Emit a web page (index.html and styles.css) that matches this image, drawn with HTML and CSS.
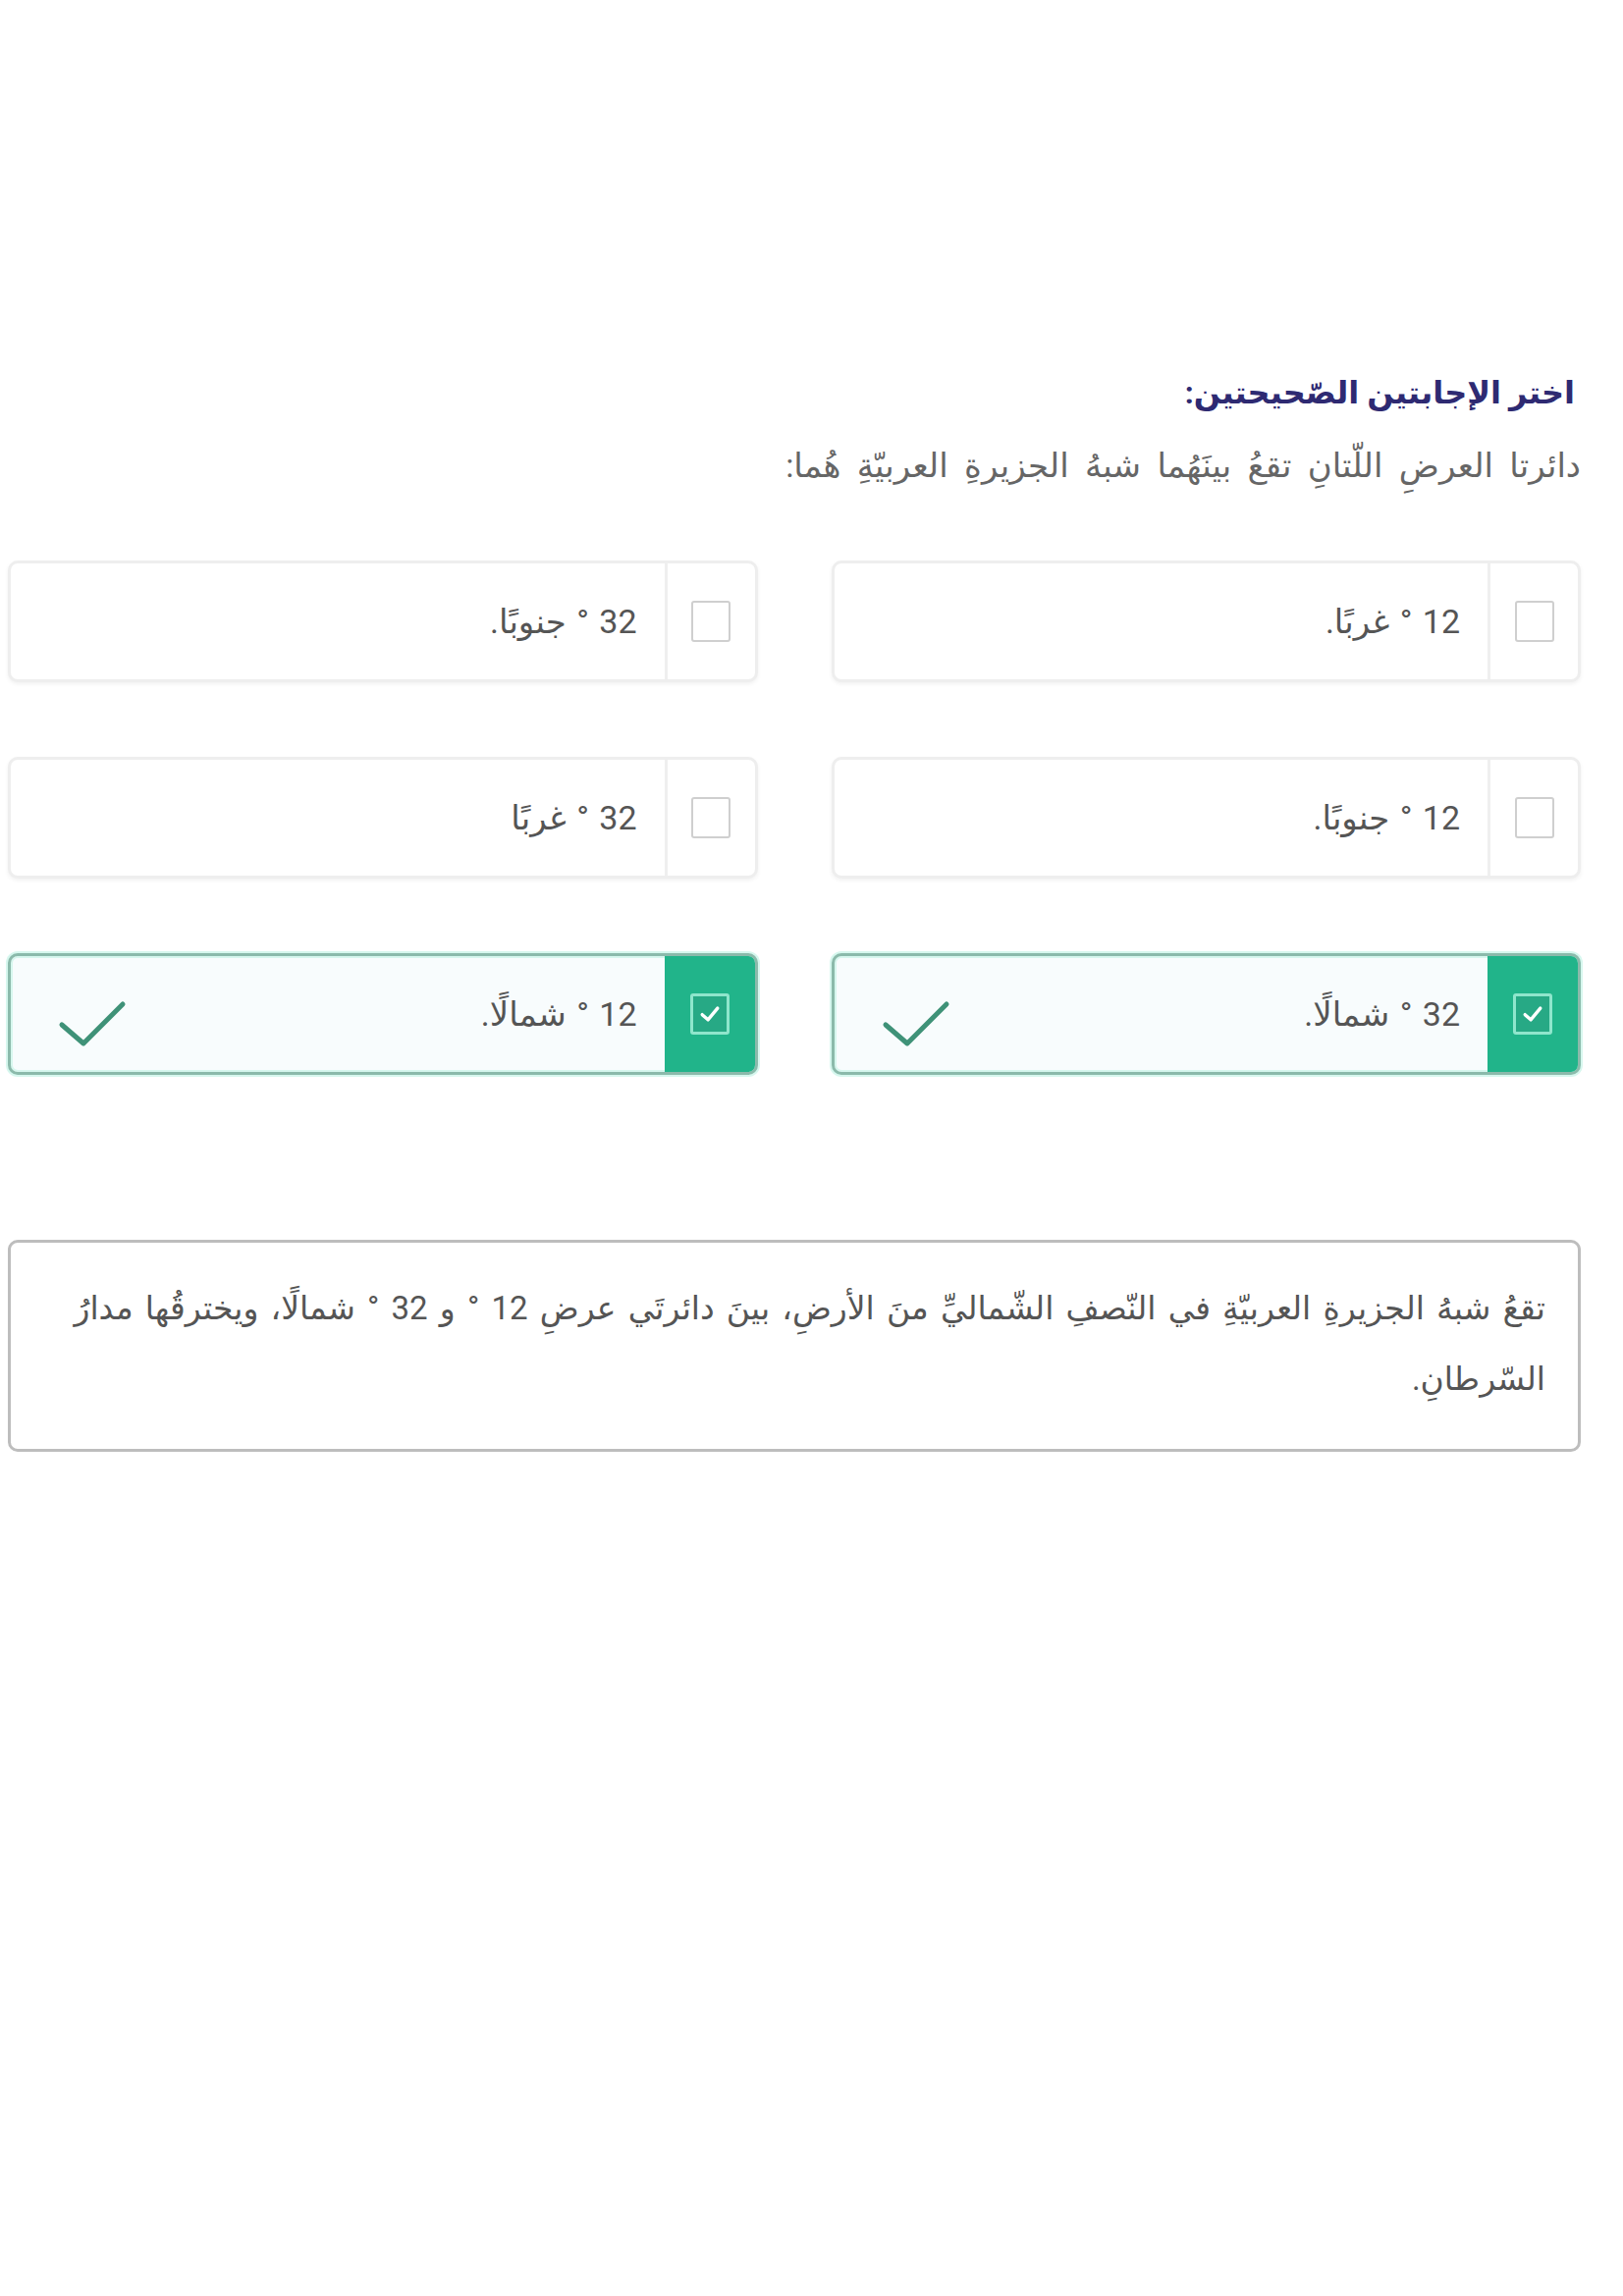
FILE: index.html
```html
<!DOCTYPE html>
<html lang="ar" dir="rtl">
<head>
<meta charset="utf-8">
<title>اختر الإجابتين الصحيحتين</title>
<link rel="stylesheet" href="styles.css">
</head>
<body>
<main class="page">
  <h2 class="title">اختر الإجابتين الصّحيحتين:</h2>
  <p class="question">دائرتا العرضِ اللّتانِ تقعُ بينَهُما شبهُ الجزيرةِ العربيّةِ هُما:</p>

  <div class="options">
    <label class="option">
      <span class="box"><span class="square"></span></span>
      <span class="text">12 ° غربًا.</span>
    </label>
    <label class="option">
      <span class="box"><span class="square"></span></span>
      <span class="text">32 ° جنوبًا.</span>
    </label>
    <label class="option">
      <span class="box"><span class="square"></span></span>
      <span class="text">12 ° جنوبًا.</span>
    </label>
    <label class="option">
      <span class="box"><span class="square"></span></span>
      <span class="text">32 ° غربًا</span>
    </label>
    <label class="option selected">
      <span class="box"><span class="square"><svg viewBox="0 0 20 20" width="26" height="26"><path d="M4 10.5 L8.5 14.5 L16 5.5" fill="none" stroke="#ffffff" stroke-width="2.6" stroke-linecap="round" stroke-linejoin="round"/></svg></span></span>
      <span class="text">32 ° شمالًا.</span>
      <svg class="mark" viewBox="0 0 70 48" width="70" height="48"><path d="M4 25 L26 44 L66 4" fill="none" stroke="#3f9278" stroke-width="5" stroke-linecap="round" stroke-linejoin="round"/></svg>
    </label>
    <label class="option selected">
      <span class="box"><span class="square"><svg viewBox="0 0 20 20" width="26" height="26"><path d="M4 10.5 L8.5 14.5 L16 5.5" fill="none" stroke="#ffffff" stroke-width="2.6" stroke-linecap="round" stroke-linejoin="round"/></svg></span></span>
      <span class="text">12 ° شمالًا.</span>
      <svg class="mark" viewBox="0 0 70 48" width="70" height="48"><path d="M4 25 L26 44 L66 4" fill="none" stroke="#3f9278" stroke-width="5" stroke-linecap="round" stroke-linejoin="round"/></svg>
    </label>
  </div>

  <div class="explain">تقعُ شبهُ الجزيرةِ العربيّةِ في النّصفِ الشّماليِّ منَ الأرضِ، بينَ دائرتَي عرضِ 12 ° و 32 ° شمالًا، ويخترقُها مدارُ السّرطانِ.</div>
</main>
</body>
</html>
```

FILE: styles.css
```css
* { box-sizing: border-box; }

html, body {
  margin: 0;
  background: #ffffff;
}

body {
  font-family: "Roboto", "DejaVu Sans", sans-serif;
  color: #555555;
}

.page {
  width: 1653px;
  padding: 380px 43px 0 8px;
}

.title {
  margin: 0;
  padding-right: 6px;
  font-size: 32px;
  line-height: 40px;
  font-weight: 700;
  color: #2e2a72;
}

.question {
  margin: 34px 0 0;
  font-size: 34px;
  line-height: 40px;
  word-spacing: 8px;
  color: #666666;
}

.options {
  margin-top: 77px;
  display: grid;
  grid-template-columns: 1fr 1fr;
  column-gap: 75px;
  row-gap: 76px;
}

.option {
  height: 124px;
  display: flex;
  align-items: stretch;
  border: 3px solid #eeeeee;
  border-radius: 10px;
  box-shadow: 0 2px 4px rgba(0, 0, 0, 0.06);
  background: #ffffff;
  overflow: hidden;
}

.box {
  width: 92px;
  flex: 0 0 92px;
  display: flex;
  align-items: center;
  justify-content: center;
  border-left: 3px solid #efefef;
}

.square {
  width: 40px;
  height: 42px;
  border: 2px solid #cfcfcf;
  border-radius: 3px;
  display: flex;
  align-items: center;
  justify-content: center;
}

.text {
  display: flex;
  align-items: center;
  padding-right: 28px;
  font-size: 34px;
  word-spacing: 2px;
  color: #555555;
}

.option.selected {
  border-color: #8bbaab;
  background: #f8fcfd;
  box-shadow: 0 0 0 2px #d6f7ee, inset 0 0 0 2px #d6f7ee;
}

.option.selected .box {
  background: #21b48a;
  border-left: none;
}

.option.selected .square {
  border-color: #8fe6cc;
  border-width: 3px;
  background: #27a985;
}

.mark {
  align-self: center;
  margin-right: auto;
  margin-left: 48px;
  margin-top: 20px;
}

.explain {
  margin-top: 168px;
  height: 216px;
  border: 3px solid #bdbdbd;
  border-radius: 10px;
  padding: 31px 33px 0 40px;
  font-size: 33px;
  line-height: 72px;
  word-spacing: 4px;
  color: #555555;
}
```
